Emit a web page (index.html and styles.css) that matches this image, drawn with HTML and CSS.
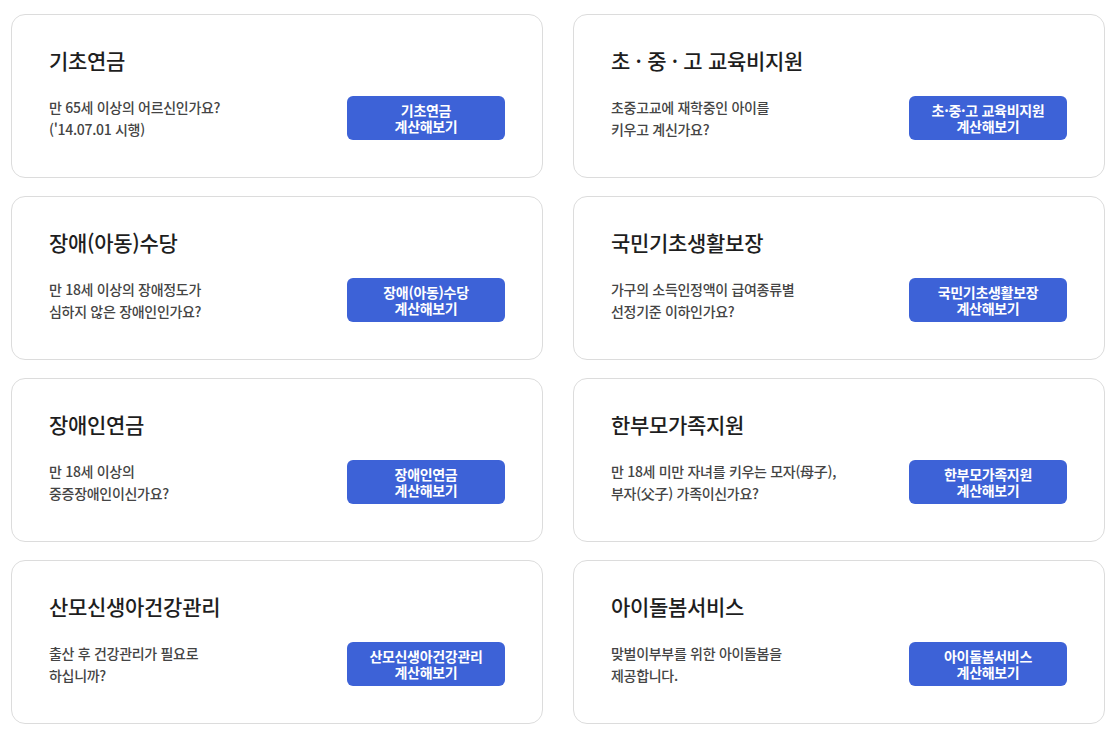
FILE: index.html
```html
<!DOCTYPE html>
<html lang="ko">
<head>
<meta charset="utf-8">
<link rel="stylesheet" href="styles.css">
</head>
<body>
<div class="grid">
  <div class="card">
    <h2 class="title">기초연금</h2>
    <div class="row">
      <p class="desc">만 65세 이상의 어르신인가요?<br>('14.07.01 시행)</p>
      <a class="btn">기초연금<br>계산해보기</a>
    </div>
  </div>
  <div class="card">
    <h2 class="title">초 · 중 · 고 교육비지원</h2>
    <div class="row">
      <p class="desc">초중고교에 재학중인 아이를<br>키우고 계신가요?</p>
      <a class="btn">초·중·고 교육비지원<br>계산해보기</a>
    </div>
  </div>
  <div class="card">
    <h2 class="title">장애(아동)수당</h2>
    <div class="row">
      <p class="desc">만 18세 이상의 장애정도가<br>심하지 않은 장애인인가요?</p>
      <a class="btn">장애(아동)수당<br>계산해보기</a>
    </div>
  </div>
  <div class="card">
    <h2 class="title">국민기초생활보장</h2>
    <div class="row">
      <p class="desc">가구의 소득인정액이 급여종류별<br>선정기준 이하인가요?</p>
      <a class="btn">국민기초생활보장<br>계산해보기</a>
    </div>
  </div>
  <div class="card">
    <h2 class="title">장애인연금</h2>
    <div class="row">
      <p class="desc">만 18세 이상의<br>중증장애인이신가요?</p>
      <a class="btn">장애인연금<br>계산해보기</a>
    </div>
  </div>
  <div class="card">
    <h2 class="title">한부모가족지원</h2>
    <div class="row">
      <p class="desc">만 18세 미만 자녀를 키우는 모자(母子),<br>부자(父子) 가족이신가요?</p>
      <a class="btn">한부모가족지원<br>계산해보기</a>
    </div>
  </div>
  <div class="card">
    <h2 class="title">산모신생아건강관리</h2>
    <div class="row">
      <p class="desc">출산 후 건강관리가 필요로<br>하십니까?</p>
      <a class="btn">산모신생아건강관리<br>계산해보기</a>
    </div>
  </div>
  <div class="card">
    <h2 class="title">아이돌봄서비스</h2>
    <div class="row">
      <p class="desc">맞벌이부부를 위한 아이돌봄을<br>제공합니다.</p>
      <a class="btn">아이돌봄서비스<br>계산해보기</a>
    </div>
  </div>
</div>
</body>
</html>
```
FILE: styles.css
```css
html, body {
  margin: 0;
  padding: 0;
  background: #fff;
}
body {
  font-family: "Noto Sans CJK KR", "Noto Sans", sans-serif;
  color: #222;
}
.grid {
  display: grid;
  grid-template-columns: 532px 532px;
  column-gap: 30px;
  row-gap: 18px;
  padding: 14px 0 0 11px;
}
.card {
  box-sizing: border-box;
  height: 164px;
  border: 1px solid #dcdcdc;
  border-radius: 14px;
  padding: 30px 37px 0 37px;
}
.title {
  margin: 0;
  font-size: 21px;
  line-height: 30px;
  font-weight: 500;
  color: #1e1e1e;
  letter-spacing: -0.3px;
}
.row {
  display: flex;
  align-items: center;
  justify-content: space-between;
  margin-top: 21px;
}
.desc {
  margin: 0;
  font-size: 14px;
  line-height: 22px;
  font-weight: 500;
  color: #444;
  letter-spacing: -0.3px;
}
.btn {
  box-sizing: border-box;
  width: 158px;
  height: 44px;
  background: #3d62d7;
  border-radius: 6px;
  color: #fff;
  font-size: 14px;
  line-height: 16px;
  font-weight: 700;
  text-align: center;
  display: flex;
  align-items: center;
  justify-content: center;
  letter-spacing: -0.3px;
}
```
